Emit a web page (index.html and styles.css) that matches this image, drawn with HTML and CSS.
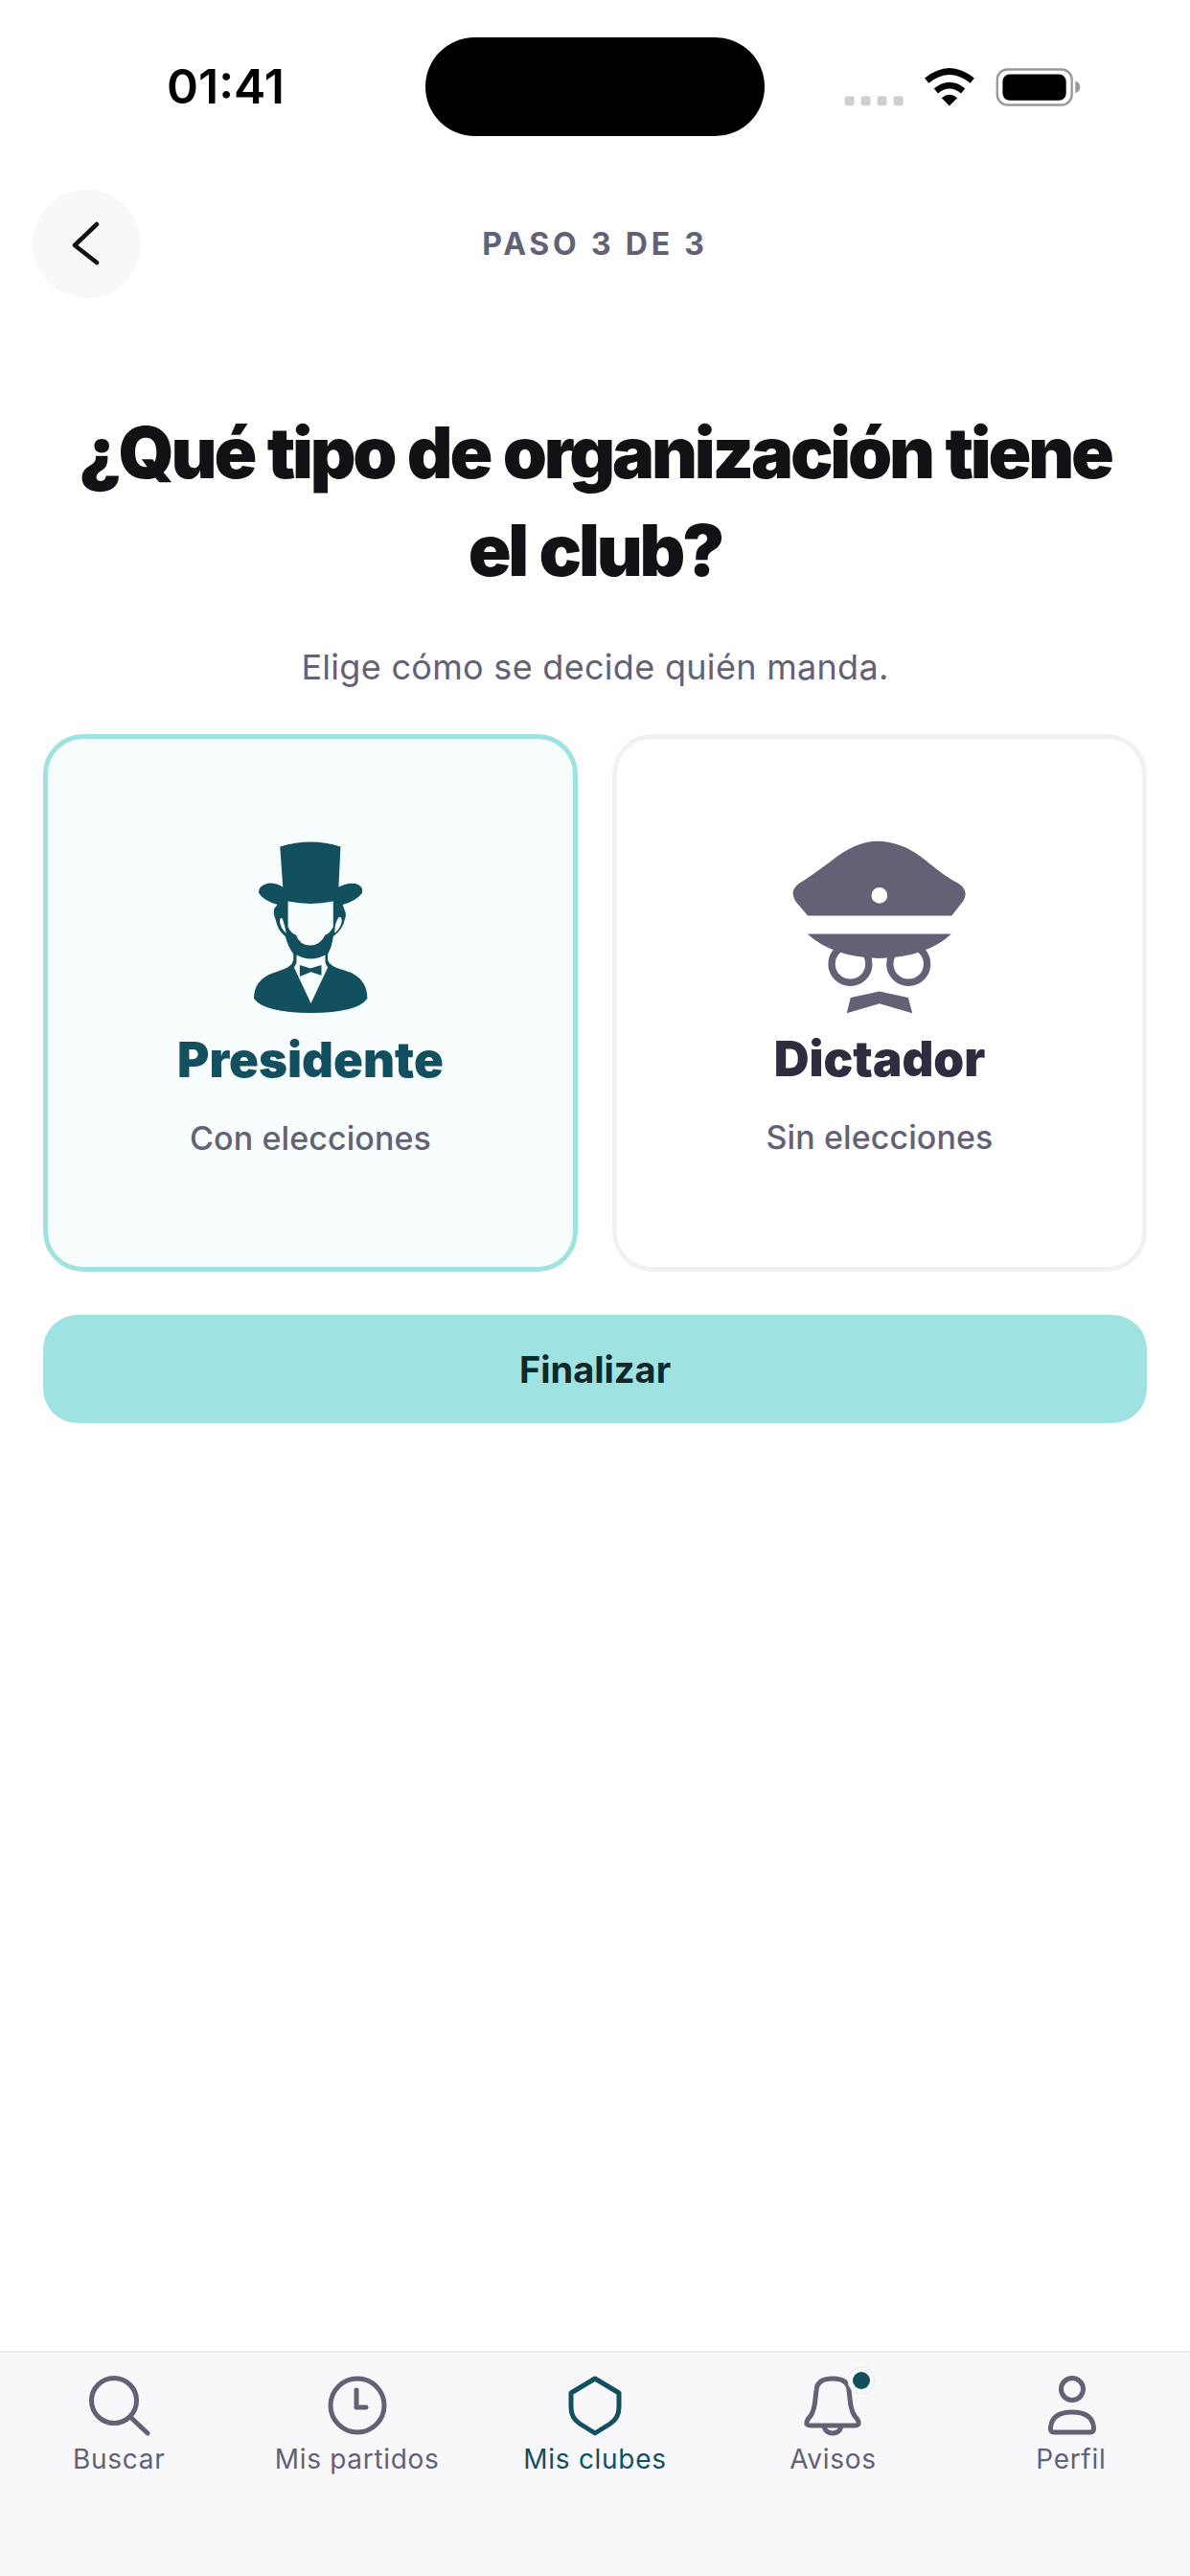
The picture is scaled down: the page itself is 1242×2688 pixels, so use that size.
FILE: index.html
```html
<!DOCTYPE html>
<html lang="es">
<head>
<meta charset="utf-8">
<title>Paso 3 de 3</title>
<link rel="stylesheet" href="styles.css">
</head>
<body>
<div class="app">
  <div class="status">
    <div class="time">01:41</div>
    <div class="island"></div>
    <svg class="status-icons" viewBox="60 85 745 125" width="248" height="42">
      <g fill="#cfcfcf"><rect x="65" y="178" width="30" height="30" rx="8"/><rect x="116" y="178" width="30" height="30" rx="8"/><rect x="167" y="178" width="30" height="30" rx="8"/><rect x="218" y="178" width="30" height="30" rx="8"/></g>
      <path d="M322 130Q393 72 465 130M351 162Q393 128 436 162" fill="none" stroke="#000" stroke-width="20"/>
      <path d="M369 184Q393 164 418 184L393 209Z" fill="#000"/>
      <rect x="543" y="95" width="234" height="111" rx="32" fill="none" stroke="#999" stroke-width="7"/>
      <rect x="560" y="110" width="199" height="82" rx="22" fill="#000"/>
      <path d="M788 131Q803 136 803 150Q803 164 788 169Z" fill="#999"/>
    </svg>
  </div>

  <header class="topbar">
    <button class="back" aria-label="Volver">
      <svg viewBox="0 0 113 113" width="113" height="113"><path d="M67 36L44 58L67 76" class="chev"/></svg>
    </button>
    <div class="step">PASO 3 DE 3</div>
  </header>

  <main class="main">
    <h1 class="title">¿Qué tipo de organización tiene el club?</h1>
    <p class="subtitle">Elige cómo se decide quién manda.</p>

    <div class="cards">
      <div class="card card-on">
        <svg class="card-icon" viewBox="100 50 370 545" width="123" height="182">
          <path fill="#12505f" fill-rule="evenodd" d="M188 68Q285 38 378 68L372 195Q400 180 425 184Q452 192 445 215Q425 240 385 250L390 265Q398 280 392 295Q385 330 355 350Q352 380 338 405L338 425Q345 445 385 455Q462 475 462 545Q430 590 285 590Q140 590 106 545Q106 480 180 460Q225 448 230 425L230 405Q212 380 205 350Q180 330 175 300Q165 280 170 262L180 250Q140 240 122 215Q116 192 150 183Q175 181 197 195ZM213 240Q285 255 355 240L355 320Q345 340 330 345Q315 378 282 378Q250 378 238 345Q222 340 213 320ZM195 293Q205 320 207 340Q190 325 187 302Q188 290 195 293ZM372 290Q358 310 360 340Q378 325 382 302Q382 288 372 290ZM240 408Q285 432 330 408L330 430Q332 440 338 447L285 560L232 447Q238 440 240 430Z"/>
          <path fill="#12505f" d="M250 440L283 450L318 440L318 472L285 462L250 476Z"/>
        </svg>
        <div class="card-name name-on">Presidente</div>
        <div class="card-sub">Con elecciones</div>
      </div>
      <div class="card">
        <svg class="card-icon" viewBox="80 50 545 542" width="182" height="181">
          <circle cx="261" cy="436" r="58" fill="none" stroke="#626175" stroke-width="22"/>
          <circle cx="443" cy="436" r="58" fill="none" stroke="#626175" stroke-width="22"/>
          <path fill="#626175" fill-rule="evenodd" d="M128 285L90 240Q70 208 100 185Q140 160 200 115Q280 50 350 52Q430 55 500 115Q560 165 600 185Q632 208 615 238L578 285ZM352 197A25 25 0 1 0 352 247A25 25 0 1 0 352 197Z"/>
          <path fill="#626175" d="M127 342L577 342Q500 415 352 418Q205 415 127 342Z"/>
          <path fill="#626175" d="M262 541L352 522L442 541L455 590L352 560L250 590Z"/>
        </svg>
        <div class="card-name">Dictador</div>
        <div class="card-sub">Sin elecciones</div>
      </div>
    </div>

    <button class="finish">Finalizar</button>
  </main>

  <nav class="nav">
    <div class="tab">
      <svg class="tab-icon" viewBox="0 0 64 62" width="64" height="62"><circle cx="27" cy="26" r="23.5"/><path d="M45 44L62 60"/></svg>
      <span>Buscar</span>
    </div>
    <div class="tab">
      <svg class="tab-icon" viewBox="0 0 64 62" width="64" height="62"><circle cx="32" cy="31" r="28"/><path d="M31 15V33H41"/></svg>
      <span>Mis partidos</span>
    </div>
    <div class="tab tab-on">
      <svg class="tab-icon" viewBox="0 0 64 62" width="64" height="62"><path d="M32 3L57 18V33Q57 44 48 50L32 60L16 50Q7 44 7 33V18Z"/></svg>
      <span>Mis clubes</span>
    </div>
    <div class="tab">
      <svg class="tab-icon" viewBox="0 0 64 62" width="64" height="62">
        <path d="M9 52Q4 52 5 48Q6 45 9 42Q13 36 14 24L15 15Q16 3 32 3Q48 3 49 15L50 24Q51 36 55 42Q58 45 59 48Q60 52 55 52Z"/>
        <path d="M23 53Q25 60 32 60Q39 60 41 53"/>
        <circle class="dot-ring" cx="62" cy="5" r="14"/>
        <circle class="dot" cx="62" cy="5" r="9"/>
      </svg>
      <span>Avisos</span>
    </div>
    <div class="tab">
      <svg class="tab-icon" viewBox="0 0 64 62" width="64" height="62"><circle cx="33" cy="14" r="11.5"/><path d="M14 59Q10 59 10.500 54Q12 38 33 38Q54 38 55.500 54Q56 59 52 59Z"/></svg>
      <span>Perfil</span>
    </div>
  </nav>
</div>
</body>
</html>
```
FILE: styles.css
```css
* { box-sizing: border-box; }
html, body { margin: 0; padding: 0; background: #fff; }
body { font-family: Inter, "Liberation Sans", sans-serif; }
.app { width: 1242px; height: 2688px; display: flex; flex-direction: column; overflow: hidden; }

.status { height: 180px; display: flex; align-items: center; padding-left: 174px; }
.time { width: 270px; font-size: 50px; font-weight: 600; color: #000; letter-spacing: 0; }
.island { width: 354px; height: 103px; background: #000; border-radius: 52px; }
.status-icons { margin-left: 82px; display: block; }

.topbar { display: grid; grid-template-columns: 113px 1fr 113px; align-items: center; padding: 18px 34px 0; }
.back { width: 113px; height: 113px; padding: 0; border: 0; border-radius: 50%; background: #f8f8fb; }
.back svg { display: block; }
.chev { fill: none; stroke: #111; stroke-width: 4.500; stroke-linecap: round; stroke-linejoin: round; }
.step { text-align: center; font-size: 32px; font-weight: 700; letter-spacing: 3.800px; color: #626175; }

.main { flex: 1; padding: 110px 45px 0; display: flex; flex-direction: column; }
.title { margin: 0 auto; width: 1100px; text-align: center; font-size: 74px; line-height: 102px; font-weight: 900; letter-spacing: -3.200px; word-spacing: 2px; color: #111116; }
.subtitle { margin: 49px 0 0; text-align: center; font-size: 36px; line-height: 44px; letter-spacing: 0.300px; color: #626175; }

.cards { display: grid; grid-template-columns: 1fr 1fr; gap: 36px; margin-top: 48px; }
.card { height: 561px; border: 5px solid #f0f1f2; border-radius: 42px; background: #fff; display: flex; flex-direction: column; align-items: center; padding-top: 106px; }
.card-on { border-color: #9ee3e1; background: #f7fdfd; }
.card-icon { display: block; }
.card-name { margin-top: 16px; font-size: 51px; line-height: 62px; font-weight: 900; color: #2e2d40; }
.name-on { color: #12505f; }
.card-sub { margin-top: 30px; font-size: 34px; line-height: 42px; font-weight: 500; letter-spacing: 0.100px; color: #626175; }

.finish { margin-top: 45px; height: 113px; border: 0; border-radius: 36px; background: #9ee3e1; font-family: inherit; font-size: 38px; font-weight: 700; color: #10272c; }

.nav { height: 235px; flex: none; display: flex; align-items: flex-start; padding-top: 24px; background: #f8f8fb; border-top: 2px solid #eeeef0; }
.tab { flex: 1; display: flex; flex-direction: column; align-items: center; gap: 8px; font-size: 28px; line-height: 34px; font-weight: 400; letter-spacing: 0.700px; color: #626175; }
.tab-icon { display: block; overflow: visible; fill: none; stroke: #626175; stroke-width: 5; stroke-linecap: round; stroke-linejoin: round; }
.tab-on { color: #12505f; }
.tab-on .tab-icon { stroke: #12505f; }
.dot-ring { fill: #f8f8fb; stroke: #dcecec; stroke-width: 1; }
.dot { fill: #12505f; stroke: none; }
```
